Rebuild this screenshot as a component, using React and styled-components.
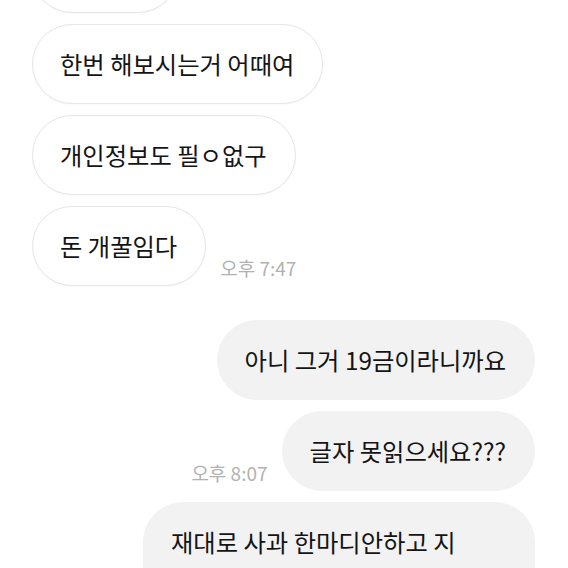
import React from "react";
import styled, { createGlobalStyle } from "styled-components";

const Global = createGlobalStyle`
  html, body { margin: 0; padding: 0; background: #ffffff; }
  body { font-family: "Noto Sans CJK KR", "Noto Sans", sans-serif; }
`;

const Viewport = styled.div`
  width: 568px;
  height: 568px;
  overflow: hidden;
  background: #ffffff;
`;

const Thread = styled.div`
  display: flex;
  flex-direction: column;
  margin-top: -67px;
`;

const Group = styled.div`
  display: flex;
  flex-direction: column;
  gap: 11px;
  padding: ${(p) => (p.$mine ? "0 33px 0 0" : "0 0 0 32px")};
  margin-top: ${(p) => p.$gapTop || 0}px;
`;

const Row = styled.div`
  display: flex;
  flex-direction: ${(p) => (p.$mine ? "row-reverse" : "row")};
  align-items: flex-end;
  gap: 14px;
`;

const Bubble = styled.div`
  box-sizing: border-box;
  max-width: 392px;
  min-height: 80px;
  padding: 20px 28px 20px 27px;
  border-radius: 40px;
  font-size: 24.3px;
  line-height: 38px;
  color: #141414;
  background: ${(p) => (p.$mine ? "#f2f2f2" : "#ffffff")};
  border: ${(p) => (p.$mine ? "1px solid #f2f2f2" : "1px solid #e6e6e6")};
  box-shadow: ${(p) => (p.$mine ? "none" : "0 1px 2px rgba(0,0,0,0.03)")};
`;

const Time = styled.span`
  font-size: 19px;
  line-height: 22px;
  color: #b2b2b2;
  padding-bottom: 7px;
  white-space: nowrap;
`;

export default function App() {
  return (
    <Viewport>
      <Global />
      <Thread>
        <Group>
          <Row><Bubble>해보세요</Bubble></Row>
          <Row><Bubble>한번 해보시는거 어때여</Bubble></Row>
          <Row><Bubble>개인정보도 필ㅇ없구</Bubble></Row>
          <Row>
            <Bubble>돈 개꿀임다</Bubble>
            <Time>오후 7:47</Time>
          </Row>
        </Group>
        <Group $mine $gapTop={34}>
          <Row $mine><Bubble $mine>아니 그거 19금이라니까요</Bubble></Row>
          <Row $mine>
            <Bubble $mine>글자 못읽으세요???</Bubble>
            <Time>오후 8:07</Time>
          </Row>
          <Row $mine>
            <Bubble $mine>
              재대로 사과 한마디안하고 지<br />
              랄하시는건 좀 아니지 않나요 진짜로요
            </Bubble>
          </Row>
        </Group>
      </Thread>
    </Viewport>
  );
}
